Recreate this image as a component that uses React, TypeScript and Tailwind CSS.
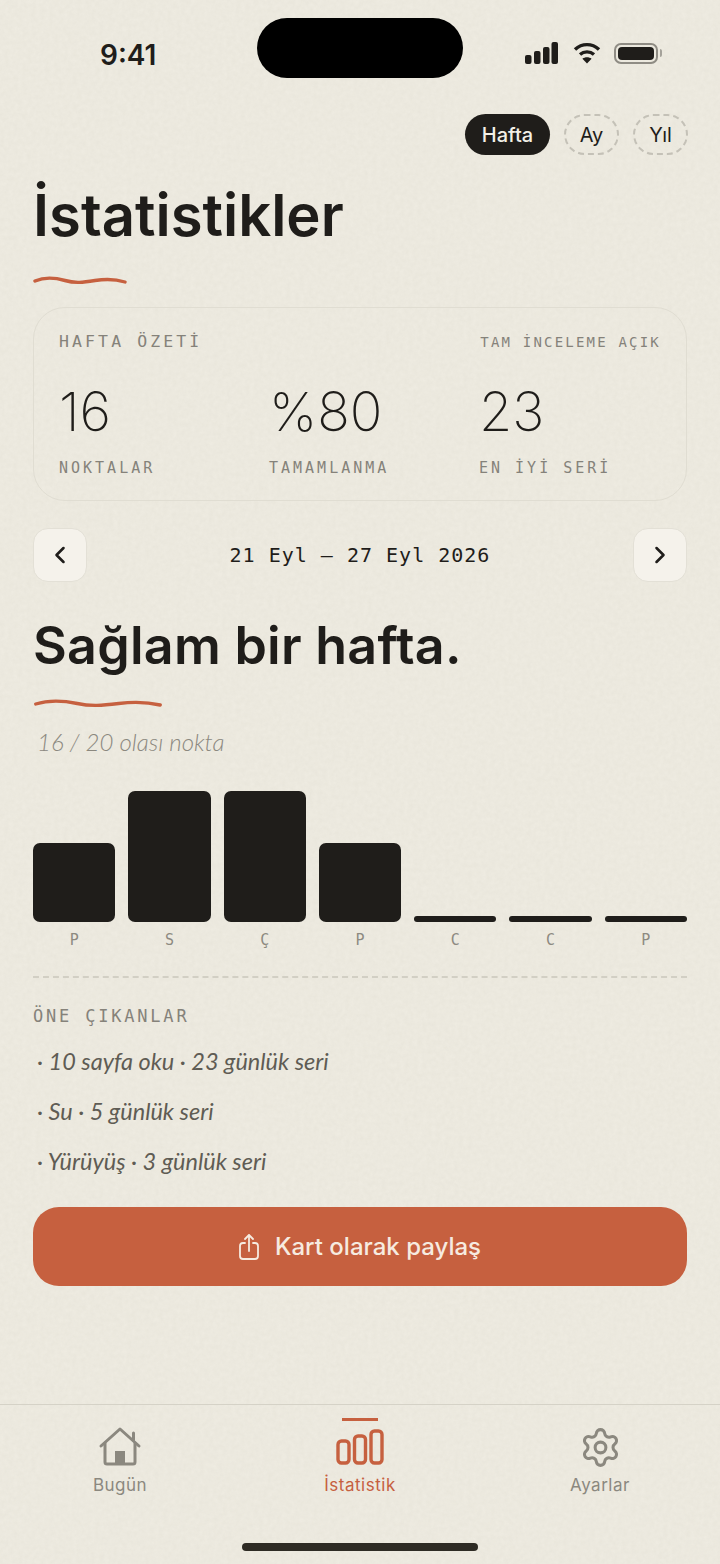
import { ChevronLeft, ChevronRight, Settings } from "lucide-react";

const ink = "text-[#1f1d1a]";
const mono = "font-['DejaVu_Sans_Mono',monospace]";
const hand = "font-['Lato',sans-serif] italic";

const bars = [
  { day: "P", h: "h-[79px]" },
  { day: "S", h: "h-[131px]" },
  { day: "Ç", h: "h-[131px]" },
  { day: "P", h: "h-[79px]" },
  { day: "C", h: "h-[6px]" },
  { day: "C", h: "h-[6px]" },
  { day: "P", h: "h-[6px]" },
];

export default function App() {
  return (
    <div className={`relative flex h-[1564px] w-[720px] flex-col overflow-hidden bg-[#eeebe1] font-['Inter',sans-serif] ${ink}`}>
      <PaperGrain />
      <StatusBar />

      <main className="relative flex flex-1 flex-col px-[33px]">
        <div className="mt-[36px] -mr-[1px] flex justify-end gap-[14px]">
          <button className="h-[41px] w-[85px] rounded-full bg-[#1f1d1a] text-[20px] font-medium text-[#f3f0e7]">Hafta</button>
          <RangeChip label="Ay" />
          <RangeChip label="Yıl" />
        </div>

        <h1 className="mt-[24px] text-[58px] leading-[72px] font-semibold">İstatistikler</h1>
        <Squiggle className="mt-[23px] h-[12px] w-[94px]" />

        <section className="mt-[21px] h-[194px] rounded-[32px] border border-[#e0ddd2] px-[25px] pt-[24px]">
          <div className={`flex items-center justify-between ${mono} text-[#85827a]`}>
            <span className="text-[16.5px] leading-[20px] tracking-[3.1px]">HAFTA ÖZETİ</span>
            <span className="text-[14px] leading-[20px] tracking-[2.2px]">TAM İNCELEME AÇIK</span>
          </div>
          <div className="mt-[28px] grid grid-cols-3 gap-x-[28px]">
            <Stat value="16" label="NOKTALAR" />
            <Stat value="%80" label="TAMAMLANMA" />
            <Stat value="23" label="EN İYİ SERİ" />
          </div>
        </section>

        <div className="mt-[27px] flex items-center justify-between">
          <NavButton>
            <ChevronLeft className="h-[28px] w-[28px]" strokeWidth={2.2} />
          </NavButton>
          <span className={`${mono} text-[20px] tracking-[1px]`}>21 Eyl – 27 Eyl 2026</span>
          <NavButton>
            <ChevronRight className="h-[28px] w-[28px]" strokeWidth={2.2} />
          </NavButton>
        </div>

        <h2 className="mt-[28px] text-[52px] leading-[72px] font-semibold tracking-[0.005em]">Sağlam bir hafta.</h2>
        <Squiggle className="mt-[15px] h-[12px] w-[130px]" />

        <p className={`${hand} mt-[18px] ml-[4px] text-[24px] leading-[30px] font-light text-[#8b887f]`}>16 / 20 olası nokta</p>

        <div className="mt-[34px] grid h-[131px] grid-cols-7 items-end gap-x-[13px]">
          {bars.map((b, i) => (
            <div key={i} className={`${b.h} ${b.h === "h-[6px]" ? "rounded-full" : "rounded-[7px]"} bg-[#1f1d1a]`} />
          ))}
        </div>
        <div className="mt-[8px] grid grid-cols-7 gap-x-[13px]">
          {bars.map((b, i) => (
            <span key={i} className={`${mono} text-center text-[15px] leading-[20px] text-[#8d8a81]`}>{b.day}</span>
          ))}
        </div>

        <div className="mt-[26px] border-t-2 border-dashed border-[#d2cfc4]" />

        <h3 className={`${mono} mt-[28px] text-[17px] leading-[20px] tracking-[2.8px] text-[#85827a]`}>ÖNE ÇIKANLAR</h3>

        <ul className={`${hand} mt-[20px] ml-[4px] flex flex-col gap-[20px] text-[23.5px] leading-[30px] text-[#5f5c54]`}>
          <li>· 10 sayfa oku · 23 günlük seri</li>
          <li>· Su · 5 günlük seri</li>
          <li>· Yürüyüş · 3 günlük seri</li>
        </ul>

        <button className="mt-[31px] flex h-[79px] items-center justify-center gap-[16px] rounded-[26px] bg-[#c6603f] text-[24px] font-medium text-[#f6ebe0]">
          <ShareIcon />
          Kart olarak paylaş
        </button>
      </main>

      <BottomNav />
    </div>
  );
}

// faint paper texture over the whole page
function PaperGrain() {
  return (
    <svg className="pointer-events-none absolute inset-0 h-full w-full opacity-[0.08]">
      <filter id="grain">
        <feTurbulence type="fractalNoise" baseFrequency="0.22" numOctaves="4" seed="4" />
        <feColorMatrix values="0 0 0 0 0.4  0 0 0 0 0.38  0 0 0 0 0.3  0 0 0 1.2 -0.2" />
      </filter>
      <rect width="100%" height="100%" filter="url(#grain)" />
    </svg>
  );
}

function StatusBar() {
  return (
    <div className="relative flex h-[78px] items-end justify-between pr-[58px] pl-[100px]">
      <span className="pb-[7px] text-[28px] leading-[32px] font-semibold">9:41</span>
      <div className="absolute top-[18px] left-[257px] h-[60px] w-[206px] rounded-full bg-black" />
      <div className="flex items-center pb-[14px]">
        <svg className="mr-[15px]" width="33" height="22" viewBox="0 0 33 22" fill="#1f1d1a">
          <rect x="0" y="13" width="6.5" height="9" rx="2" />
          <rect x="9" y="9" width="6.5" height="13" rx="2" />
          <rect x="18" y="5" width="6.5" height="17" rx="2" />
          <rect x="26.5" y="0" width="6.5" height="22" rx="2" />
        </svg>
        <svg width="28" height="22" viewBox="0 0 28 22" fill="none" stroke="#1f1d1a" strokeWidth="3.4">
          <path d="M2 7.5C9 1 19 1 26 7.5" />
          <path d="M7 12.5C11 9 17 9 21 12.5" />
          <path d="M14 21.5l-4.6-4.8c2.6-2 6.6-2 9.2 0z" fill="#1f1d1a" stroke="none" />
        </svg>
        <div className="ml-[13px] flex items-center gap-[2px]">
          <div className="h-[21px] w-[44px] rounded-[7px] border-2 border-[#8f8c84] p-[2px]">
            <div className="h-full w-full rounded-[4px] bg-[#1f1d1a]" />
          </div>
          <div className="h-[8px] w-[2px] rounded-r-full bg-[#a5a29a]" />
        </div>
      </div>
    </div>
  );
}

function RangeChip({ label }: { label: string }) {
  return (
    <button className="h-[41px] w-[55px] rounded-full border-2 border-dashed border-[#c4c1b7] text-[20px] font-normal">
      {label}
    </button>
  );
}

function Stat({ value, label }: { value: string; label: string }) {
  return (
    <div>
      <div className="text-[54px] leading-[64px] font-extralight">{value}</div>
      <div className={`${mono} mt-[14px] text-[15px] leading-[20px] tracking-[3px] text-[#85827a]`}>{label}</div>
    </div>
  );
}

function NavButton({ children }: { children: React.ReactNode }) {
  return (
    <button className="flex h-[54px] w-[54px] items-center justify-center rounded-[15px] border border-[#e3e0d6] bg-[#f5f2eb]">
      {children}
    </button>
  );
}

function Squiggle({ className }: { className: string }) {
  return (
    <svg className={`${className} block`} viewBox="0 0 94 12" preserveAspectRatio="none" fill="none">
      <path
        d="M2 7C10 3.5 20 3 32 6.5C42 9.5 50 8.5 62 6.5C74 4.5 84 5.5 92 8"
        stroke="#c6603f"
        strokeWidth="3.4"
        strokeLinecap="round"
        vectorEffect="non-scaling-stroke"
      />
    </svg>
  );
}

function BottomNav() {
  return (
    <nav className="relative grid h-[160px] grid-cols-3 border-t border-t-[#d5d2c7]">
      <NavItem label="Bugün" color="text-[#8b887f]" icon={<HomeIcon />} />
      <NavItem label="İstatistik" color="text-[#c6603f]" icon={<BarsIcon />} active />
      <NavItem label="Ayarlar" color="text-[#8b887f]" icon={<Settings className="h-[43px] w-[43px]" strokeWidth={1.7} />} />
      <div className="absolute bottom-[13px] left-[242px] h-[8px] w-[236px] rounded-full bg-[#2e2b24]" />
    </nav>
  );
}

function NavItem({ label, color, icon, active }: { label: string; color: string; icon: React.ReactNode; active?: boolean }) {
  return (
    <div className={`relative flex flex-col items-center pt-[21px] ${color}`}>
      {active && <div className="absolute top-[13px] h-[3px] w-[36px] bg-[#c6603f]" />}
      <div className="flex h-[42px] items-center">{icon}</div>
      <span className="mt-[5px] text-[17px] leading-[24px] tracking-[0.03em]">{label}</span>
    </div>
  );
}

function HomeIcon() {
  return (
    <svg width="44" height="42" viewBox="0 0 44 42" fill="none" stroke="currentColor" strokeWidth="3" strokeLinecap="round" strokeLinejoin="round">
      <path d="M3 20L22 3L41 20" />
      <path d="M35.5 14V7" />
      <path d="M7 17V36a2 2 0 0 0 2 2H35a2 2 0 0 0 2-2V17" />
      <rect x="17" y="25" width="10" height="13" fill="currentColor" stroke="none" />
    </svg>
  );
}

function BarsIcon() {
  return (
    <svg width="48" height="36" viewBox="0 0 48 36" fill="none" stroke="currentColor" strokeWidth="3.4">
      <rect x="2" y="12" width="11" height="22" rx="3.5" />
      <rect x="18.5" y="7" width="11" height="27" rx="3.5" />
      <rect x="35" y="2" width="11" height="32" rx="3.5" />
    </svg>
  );
}

function ShareIcon() {
  return (
    <svg width="20" height="26" viewBox="0 0 20 26" fill="none" stroke="currentColor" strokeWidth="1.8" strokeLinecap="round" strokeLinejoin="round">
      <path d="M6 9H4a3 3 0 0 0-3 3v10a3 3 0 0 0 3 3h12a3 3 0 0 0 3-3V12a3 3 0 0 0-3-3h-2" />
      <path d="M10 17V1.5" />
      <path d="M6 5l4-4l4 4" />
    </svg>
  );
}
